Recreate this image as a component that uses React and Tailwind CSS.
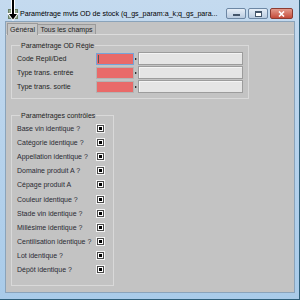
import React from "react";

const checks = [
  "Base vin identique ?",
  "Catégorie identique ?",
  "Appellation identique ?",
  "Domaine produit A ?",
  "Cépage produit A",
  "Couleur identique ?",
  "Stade vin identique ?",
  "Millésime identique ?",
  "Centilisation identique ?",
  "Lot identique ?",
  "Dépôt identique ?",
];

const odRows = [
  { label: "Code Repli/Ded", focus: true },
  { label: "Type trans. entrée" },
  { label: "Type trans. sortie" },
];

function CheckBox() {
  return (
    <div className="w-[9px] h-[9px] border border-[#f2f2f2] flex">
      <div className="flex-1 border border-[#4a4a4a] bg-white flex items-center justify-center">
        <div className="w-[3px] h-[3px] bg-black" />
      </div>
    </div>
  );
}

function Cursor() {
  return (
    <svg className="absolute left-[6px] top-0" width="14" height="22" viewBox="0 0 14 22">
      <path d="M5 0 H9 V13 H13 L7 21 L1 13 H5 Z" fill="white" />
      <path d="M6 0 H8 V14 H11 L7 19.5 L3 14 H6 Z" fill="black" />
    </svg>
  );
}

export default function App() {
  return (
    <div className="relative w-[300px] h-[300px] bg-gradient-to-b from-[#c4daef] to-[#a9cbe9] border-b border-r border-[#2f5f7a] flex flex-col font-['Liberation_Sans',Arial,sans-serif] text-[#1e1e1e] overflow-hidden">
      {/* Title bar */}
      <div className="h-[21px] flex items-start pt-[8px] pl-[8px] pr-[6px] flex-shrink-0">
        <div className="w-[10px] h-[10px] mt-[1px] mr-[2px] bg-[#8fa88a] border border-[#6a7f66] flex-shrink-0" />
        <div className="whitespace-nowrap text-[7.1px] leading-[12px] text-black">
          Paramétrage mvts OD de stock (q_gs_param:a_k;q_gs_para...
        </div>
        <div className="flex-1" />
        <div className="flex gap-[2px] flex-shrink-0">
          <div className="w-[20px] h-[11px] rounded-[2px] border border-[#6d87a4] bg-gradient-to-b from-[#e6eef7] to-[#b9cbe0] flex items-center justify-center">
            <div className="w-[7px] h-[2px] bg-white border border-[#44566b] mt-[3px]" />
          </div>
          <div className="w-[20px] h-[11px] rounded-[2px] border border-[#6d87a4] bg-gradient-to-b from-[#e6eef7] to-[#b9cbe0] flex items-center justify-center">
            <div className="w-[7px] h-[6px] border border-[#44566b] border-t-2 bg-white" />
          </div>
          <div className="w-[23px] h-[11px] rounded-[2px] border border-[#8c3b31] bg-gradient-to-b from-[#e39a8c] to-[#c44a3a] flex items-center justify-center">
            <svg width="7" height="6" viewBox="0 0 7 6">
              <path d="M1 0.5 L6 5.5 M6 0.5 L1 5.5" stroke="white" strokeWidth="1.6" />
            </svg>
          </div>
        </div>
      </div>

      {/* Client area */}
      <div className="flex-1 ml-[5px] mr-[4px] mb-[6px] border border-[#8aa3ba] bg-[#c3c3c3] flex flex-col">
        {/* Tabs */}
        <div className="flex items-end h-[12px] pl-[1px] text-[7px] leading-none">
          <div className="h-[12px] w-[31px] border border-b-0 border-[#9a9a9a] bg-[#c6c6c6] flex items-center justify-center relative z-10 -mb-px">
            Général
          </div>
          <div className="h-[10px] w-[58px] border border-b-0 border-l-0 border-[#9a9a9a] bg-[#bdbdbd] flex items-center justify-center">
            Tous les champs
          </div>
        </div>

        {/* Tab panel */}
        <div className="flex-1 border-t border-[#dcdcdc] px-[5px] pt-[6px] flex flex-col items-start text-[7px]">
          <fieldset className="w-[238px] border border-[#d9d9d9] pl-[5px] pb-[5px] pt-[2px]">
            <legend className="ml-[3px] px-[1px] leading-[9px]">Paramétrage OD Régie</legend>
            <div className="flex flex-col gap-[1px]">
              {odRows.map((r) => (
                <div key={r.label} className="flex items-center h-[13px]">
                  <span className="w-[79px] leading-none">{r.label}</span>
                  <div
                    className={`w-[38px] h-[12px] border bg-[#e96a69] ${
                      r.focus ? "border-[#76a3d8]" : "border-[#b3b3b3]"
                    } flex items-center pl-[1px]`}
                  >
                    {r.focus && <div className="w-px h-[8px] bg-[#555]" />}
                  </div>
                  <div className="w-[4px] flex justify-center">
                    <div className="w-0 h-0 border-y-[1.5px] border-y-transparent border-l-[2px] border-l-black" />
                  </div>
                  <div className="w-[105px] h-[13px] border border-[#9c9c9c] bg-[#e5e5e5] shadow-[inset_1px_1px_0_#f4f4f4]" />
                </div>
              ))}
            </div>
          </fieldset>

          <fieldset className="mt-[12px] w-[103px] border border-[#d9d9d9] pl-[5px] pb-[8px]">
            <legend className="ml-[3px] px-[1px] leading-[9px]">Paramétrages contrôles</legend>
            <div className="flex flex-col pt-[1px]">
              {checks.map((c) => (
                <div key={c} className="flex items-center h-[14.2px]">
                  <span className="w-[79px] leading-none text-[#2a2a33]">{c}</span>
                  <CheckBox />
                </div>
              ))}
            </div>
          </fieldset>
        </div>
      </div>

      <Cursor />
    </div>
  );
}
